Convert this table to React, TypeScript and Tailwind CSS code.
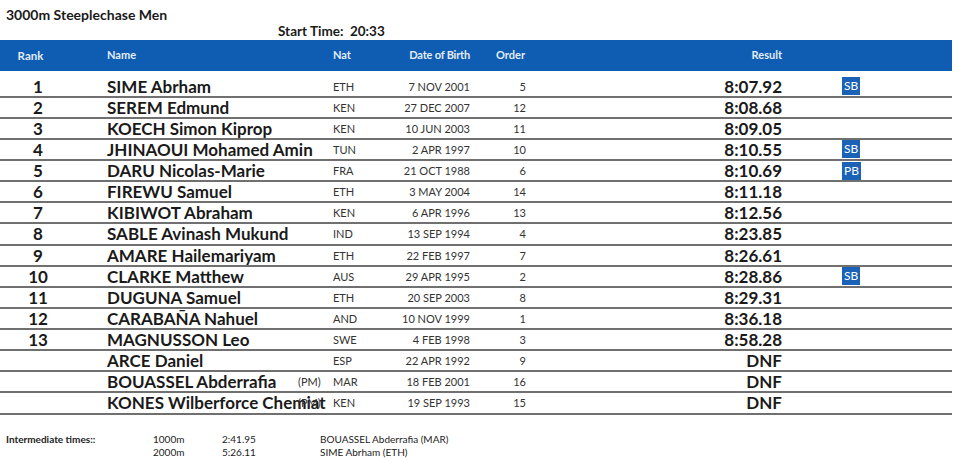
const rows = [
  { rank: '1', name: 'SIME Abrham', nat: 'ETH', dob: '7 NOV 2001', order: '5', result: '8:07.92', badge: 'SB' },
  { rank: '2', name: 'SEREM Edmund', nat: 'KEN', dob: '27 DEC 2007', order: '12', result: '8:08.68' },
  { rank: '3', name: 'KOECH Simon Kiprop', nat: 'KEN', dob: '10 JUN 2003', order: '11', result: '8:09.05' },
  { rank: '4', name: 'JHINAOUI Mohamed Amin', nat: 'TUN', dob: '2 APR 1997', order: '10', result: '8:10.55', badge: 'SB' },
  { rank: '5', name: 'DARU Nicolas-Marie', nat: 'FRA', dob: '21 OCT 1988', order: '6', result: '8:10.69', badge: 'PB' },
  { rank: '6', name: 'FIREWU Samuel', nat: 'ETH', dob: '3 MAY 2004', order: '14', result: '8:11.18' },
  { rank: '7', name: 'KIBIWOT Abraham', nat: 'KEN', dob: '6 APR 1996', order: '13', result: '8:12.56' },
  { rank: '8', name: 'SABLE Avinash Mukund', nat: 'IND', dob: '13 SEP 1994', order: '4', result: '8:23.85' },
  { rank: '9', name: 'AMARE Hailemariyam', nat: 'ETH', dob: '22 FEB 1997', order: '7', result: '8:26.61' },
  { rank: '10', name: 'CLARKE Matthew', nat: 'AUS', dob: '29 APR 1995', order: '2', result: '8:28.86', badge: 'SB' },
  { rank: '11', name: 'DUGUNA Samuel', nat: 'ETH', dob: '20 SEP 2003', order: '8', result: '8:29.31' },
  { rank: '12', name: 'CARABAÑA Nahuel', nat: 'AND', dob: '10 NOV 1999', order: '1', result: '8:36.18' },
  { rank: '13', name: 'MAGNUSSON Leo', nat: 'SWE', dob: '4 FEB 1998', order: '3', result: '8:58.28' },
  { rank: '', name: 'ARCE Daniel', nat: 'ESP', dob: '22 APR 1992', order: '9', result: 'DNF' },
  { rank: '', name: 'BOUASSEL Abderrafia', nat: 'MAR', dob: '18 FEB 2001', order: '16', result: 'DNF', pm: true },
  { rank: '', name: 'KONES Wilberforce Chemiat', nat: 'KEN', dob: '19 SEP 1993', order: '15', result: 'DNF', pm: true },
]

const splits = [
  { dist: '1000m', time: '2:41.95', who: 'BOUASSEL Abderrafia (MAR)' },
  { dist: '2000m', time: '5:26.11', who: 'SIME Abrham (ETH)' },
]

export default function App() {
  return (
    <div className="w-[960px] h-[460px] bg-white text-[#1a1a1a] overflow-hidden" style={{ fontFamily: 'Lato, "Open Sans", sans-serif' }}>
      <div className="pl-[6px] pt-[7px] h-[24px] text-[14px] font-bold leading-[16px]">3000m Steeplechase Men</div>
      <div className="pl-[278px] h-[16px] text-[13.5px] font-bold leading-[14px]">
        Start Time:&nbsp; 20:33
      </div>

      {/* Header */}
      <div className="w-[952px] h-[31px] bg-[#0f5db2] flex items-center text-[11px] font-bold text-[#e3ecf7]">
        <div className="w-[61px] text-center text-[11.5px]">Rank</div>
        <div className="ml-[46px] w-[226px]">Name</div>
        <div className="w-[60px]">Nat</div>
        <div className="w-[77px] text-right tracking-[-0.2px]">Date of Birth</div>
        <div className="w-[55px] text-right">Order</div>
        <div className="w-[257px] text-right">Result</div>
      </div>

      {/* Rows */}
      <div className="w-[952px] pt-[5.5px]">
        {rows.map((r, i) => (
          <div key={i} className="h-[21.13px] flex items-center border-b-2 border-[#707070]">
            <div className="w-[76px] text-center text-[17px] font-bold leading-none">{r.rank}</div>
            <div className="ml-[31px] w-[226px] relative text-[17px] font-bold leading-none whitespace-nowrap">
              {r.name}
              {r.pm && (
                <span className="absolute left-[191px] top-[3px] text-[11px] font-normal text-[#333]">(PM)</span>
              )}
            </div>
            <div className="w-[60px] text-[11px] text-[#333] leading-none">{r.nat}</div>
            <div className="w-[77px] text-right text-[11px] text-[#333] leading-none">{r.dob}</div>
            <div className="w-[56px] text-right text-[11px] text-[#333] leading-none">{r.order}</div>
            <div className="w-[256px] text-right text-[17px] font-bold leading-none">{r.result}</div>
            {r.badge && (
              <div className="ml-[60px] h-[18px] px-[2px] bg-[#1a62b5] text-white text-[12px] leading-[18px]">{r.badge}</div>
            )}
          </div>
        ))}
      </div>

      {/* Intermediate times */}
      <div className="pt-[18px] pl-[6px] text-[10px] text-[#222] leading-[13px]">
        {splits.map((s, i) => (
          <div key={i} className="flex">
            <div className="w-[147px] font-bold">{i === 0 ? 'Intermediate times::' : ''}</div>
            <div className="w-[69px]">{s.dist}</div>
            <div className="w-[98px]">{s.time}</div>
            <div>{s.who}</div>
          </div>
        ))}
      </div>
    </div>
  )
}
